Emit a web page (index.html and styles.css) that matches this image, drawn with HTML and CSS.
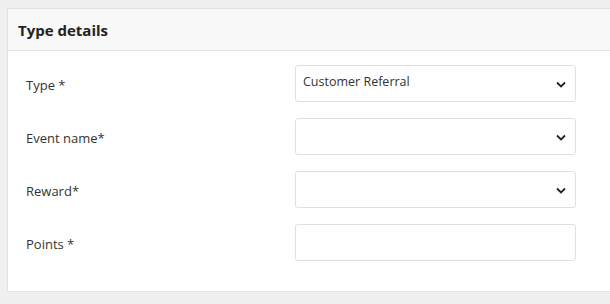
FILE: index.html
```html
<!DOCTYPE html>
<html lang="en">
<head>
    <meta charset="UTF-8">
    <meta name="viewport" content="width=device-width, initial-scale=1.0">
    <title>Type details</title>
    <link rel="stylesheet" href="styles.css">
</head>
<body>
    <div class="card">
        <div class="card-header">
            <h2>Type details</h2>
        </div>
        <div class="card-body">
            <div class="form-row">
                <label for="type">Type *</label>
                <div class="select-box" id="type">
                    <span>Customer Referral</span>
                    <svg class="chevron" width="10" height="7" viewBox="0 0 10 7"><path d="M1 1.5 L5 5.5 L9 1.5" fill="none" stroke="#222" stroke-width="1.8"/></svg>
                </div>
            </div>
            <div class="form-row">
                <label for="event">Event name*</label>
                <div class="select-box" id="event">
                    <span></span>
                    <svg class="chevron" width="10" height="7" viewBox="0 0 10 7"><path d="M1 1.5 L5 5.5 L9 1.5" fill="none" stroke="#222" stroke-width="1.8"/></svg>
                </div>
            </div>
            <div class="form-row">
                <label for="reward">Reward*</label>
                <div class="select-box" id="reward">
                    <span></span>
                    <svg class="chevron" width="10" height="7" viewBox="0 0 10 7"><path d="M1 1.5 L5 5.5 L9 1.5" fill="none" stroke="#222" stroke-width="1.8"/></svg>
                </div>
            </div>
            <div class="form-row">
                <label for="points">Points *</label>
                <input type="text" id="points" class="text-box">
            </div>
        </div>
    </div>
</body>
</html>
```

FILE: styles.css
```css
/* Basic Reset */
* {
    margin: 0;
    padding: 0;
    box-sizing: border-box;
}

body {
    font-family: "Open Sans", Arial, sans-serif;
    background-color: #f0f0f0;
    color: #333;
    padding: 8px 0 0 7px;
}

.card {
    background-color: #fff;
    border: 1px solid #e2e2e2;
    border-right: none;
}

.card-header {
    background-color: #f8f8f8;
    border-bottom: 1px solid #e2e2e2;
    height: 42px;
    padding: 0 10px;
    display: flex;
    align-items: center;
}

.card-header h2 {
    font-size: 15px;
    font-weight: 700;
    color: #222;
}

.card-body {
    padding: 14px 0 30px 18px;
    display: flex;
    flex-direction: column;
    gap: 16px;
}

.form-row {
    display: grid;
    grid-template-columns: 269px 281px;
    align-items: center;
    height: 37px;
}

.form-row label {
    font-size: 13px;
    color: #333;
    padding-top: 2px;
}

.select-box,
.text-box {
    height: 37px;
    border: 1px solid #e0e0e0;
    border-radius: 3px;
    background-color: #fff;
}

.select-box {
    display: flex;
    align-items: center;
    justify-content: space-between;
    padding: 0 9px 0 7px;
    font-size: 12.5px;
    color: #333;
}

.select-box span {
    margin-top: -4px;
}

.chevron {
    margin-top: 2px;
}

.text-box {
    width: 100%;
    font: inherit;
}
```
